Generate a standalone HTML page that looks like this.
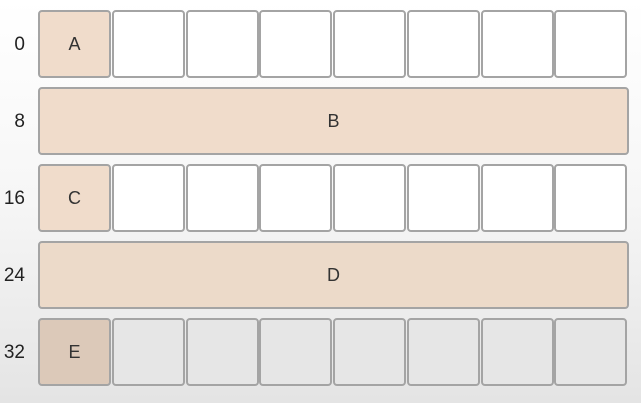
<!DOCTYPE html>
<html><head><style>
html,body{margin:0;padding:0}
body{width:641px;height:403px;overflow:hidden;position:relative;font-family:"Liberation Sans",sans-serif;background:linear-gradient(#ffffff 0%,#f6f6f6 50%,#e4e4e4 100%)}
.lbl{position:absolute;left:0;width:25px;text-align:right;font-size:19px;color:#222}
.c{position:absolute;box-sizing:border-box;border:2px solid #a4a4a4;border-radius:4px;background:#fff;text-align:center;font-size:18px;color:#333}
.t{background:#f0dccb}
</style></head><body>
<div id="root"></div>
<script>
var rows=[[10,"0","A",0],[87,"8","B",1],[164,"16","C",0],[241,"24","D",1],[318,"32","E",0]];
var h="";
rows.forEach(function(r,i){
 var y=r[0];
 h+='<div class="lbl" style="top:'+(y+24)+'px">'+r[1]+'</div>';
 if(r[3]){
  var bg=y>200?'#ecdac9':'#f0dccb';
  h+='<div class="c t" style="left:38px;top:'+y+'px;width:591px;height:68px;line-height:64px;background:'+bg+'">'+r[2]+'</div>';
 } else {
  for(var k=0;k<8;k++){
   var x=38+k*73.75;
   var bg=k==0?(y>300?'#dcc9b9':'#f0dccb'):(y>300?'#e6e6e6':'#fff');
   h+='<div class="c" style="left:'+x+'px;top:'+y+'px;width:73px;height:68px;line-height:64px;background:'+bg+'">'+(k==0?r[2]:'')+'</div>';
  }
 }
});
document.getElementById('root').innerHTML=h;
</script>
</body></html>
